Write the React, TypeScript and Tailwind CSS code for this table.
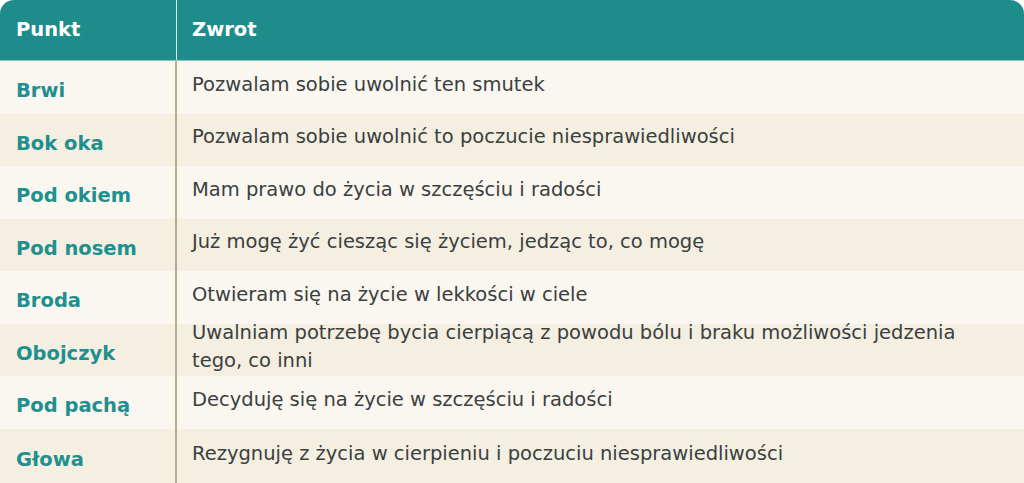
import React from "react";

const rows: [string, string][] = [
  ["Brwi", "Pozwalam sobie uwolnić ten smutek"],
  ["Bok oka", "Pozwalam sobie uwolnić to poczucie niesprawiedliwości"],
  ["Pod okiem", "Mam prawo do życia w szczęściu i radości"],
  ["Pod nosem", "Już mogę żyć ciesząc się życiem, jedząc to, co mogę"],
  ["Broda", "Otwieram się na życie w lekkości w ciele"],
  ["Obojczyk", "Uwalniam potrzebę bycia cierpiącą z powodu bólu i braku możliwości jedzenia tego, co inni"],
  ["Pod pachą", "Decyduję się na życie w szczęściu i radości"],
  ["Głowa", "Rezygnuję z życia w cierpieniu i poczuciu niesprawiedliwości"],
];

export default function App() {
  return (
    <div
      className="w-[1024px] h-[483px] overflow-hidden bg-white"
      style={{ fontFamily: '"DejaVu Sans", sans-serif' }}
    >
      <div className="rounded-t-[14px] overflow-hidden">
        <div className="flex h-[61px] bg-[#1f8c8c] border-b border-[#8cc4bf] text-white font-bold text-[19.5px] leading-[28px]">
          <div className="w-[177px] shrink-0 flex items-center pl-[16px] pb-[1px] border-r border-[#d9ecea]">
            Punkt
          </div>
          <div className="flex-1 flex items-center pl-[15px] pb-[1px]">Zwrot</div>
        </div>
        {rows.map(([a, b], i) => (
          <div
            key={a}
            className={
              "flex text-[19.5px] leading-[28.5px] " +
              (i === rows.length - 1 ? "h-[56px] " : "h-[52.5px] ") +
              (i % 2 === 0 ? "bg-[#faf7f0]" : "bg-[#f5efe2]")
            }
          >
            <div className="w-[177px] shrink-0 flex items-center pl-[16px] pt-[8px] border-r-2 border-[#b9aa8c] font-bold text-[#1f8f8f]">
              {a}
            </div>
            <div className="flex-1 flex items-center pl-[15px] pr-[60px] pb-[5px] text-[#3a4040] overflow-visible">
              <div>{b}</div>
            </div>
          </div>
        ))}
      </div>
    </div>
  );
}
